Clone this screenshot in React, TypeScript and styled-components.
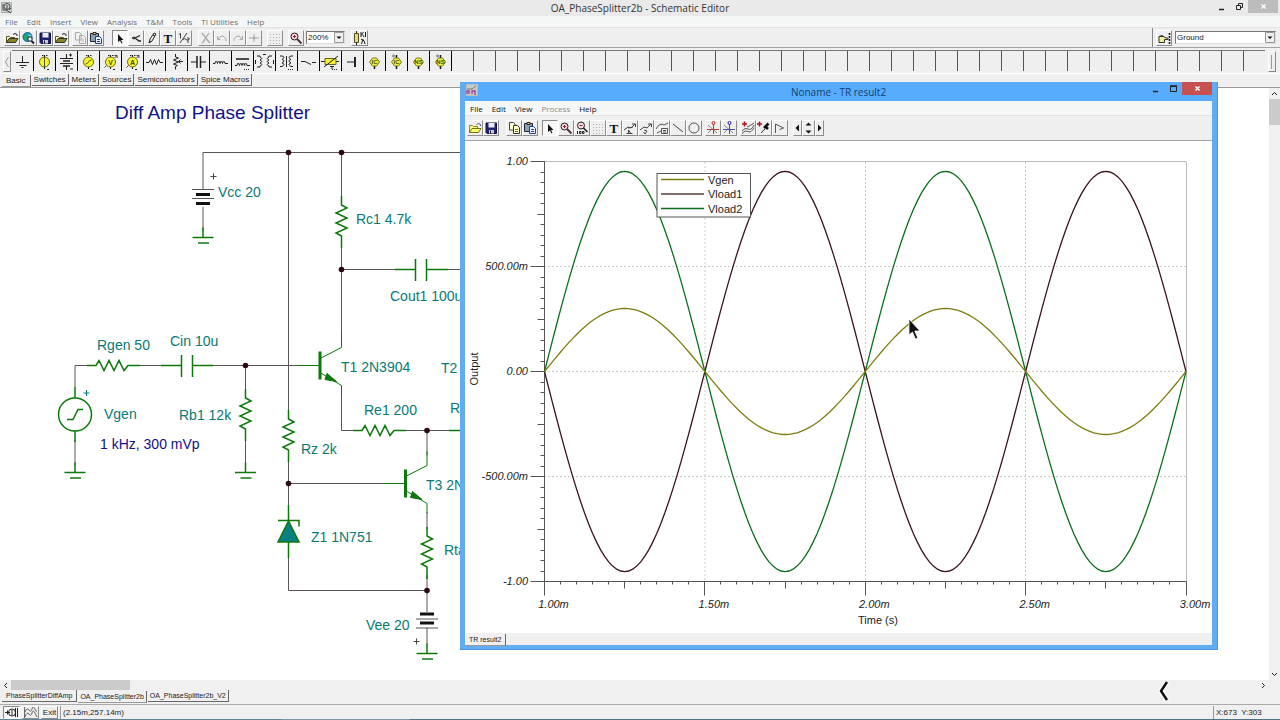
import React from "react";
import styled, { createGlobalStyle, css } from "styled-components";

const Global = createGlobalStyle`
  *, *::before, *::after { box-sizing: border-box; }
  body { margin: 0; background: #f0f0f0; }
  button, select { font: inherit; color: inherit; margin: 0; padding: 0; border-radius: 0; }
`;

const ui = `"Open Sans", "Noto Sans", sans-serif`;
const bitmap = `"Liberation Sans", Arial, sans-serif`;

const Desktop = styled.div`
  position: relative;
  display: flex;
  flex-direction: column;
  min-height: 100vh;
  overflow: hidden;
  background: #f0f0f0;
  color: #222;
  font: 8px/10px ${bitmap};
`;

/* ---------- title bars and menus ---------- */
const TitleBar = styled.header<{ $inner?: boolean }>`
  display: grid;
  grid-template-columns: 96px 1fr 96px;
  align-items: start;
  height: ${(p) => (p.$inner ? 19 : 16)}px;
  background: ${(p) => (p.$inner ? "#58acfd" : "#eaeaea")};
`;
const TitleIcon = styled.svg`
  width: 12px;
  height: 12px;
  margin: 2px 1px 0;
`;
const Title = styled.h1<{ $inner?: boolean }>`
  margin: 0;
  padding-top: ${(p) => (p.$inner ? 3 : 1)}px;
  text-align: center;
  white-space: nowrap;
  font: 400 10px/14px ${ui};
  color: ${(p) => (p.$inner ? "#12406e" : "#333")};
`;
const WinButtons = styled.div<{ $inner?: boolean }>`
  display: flex;
  justify-content: flex-end;
  margin-right: ${(p) => (p.$inner ? 0 : 2)}px;
`;
const WinButton = styled.button<{ $close?: string }>`
  display: grid;
  place-items: center;
  width: ${(p) => (p.$close ? 30 : 18)}px;
  height: 13px;
  border: 0;
  background: ${(p) => p.$close || "transparent"};
  color: ${(p) => (p.$close ? "#fff" : "#222")};
  svg { width: 9px; height: 9px; }
`;
const MenuBar = styled.nav<{ $inner?: boolean }>`
  display: flex;
  gap: 9px;
  height: ${(p) => (p.$inner ? 15 : 12)}px;
  padding: ${(p) => (p.$inner ? "2px 5px" : "0 5px")};
  border-bottom: 1px solid #e2e4e4;
  background: #f5f7f7;
  color: ${(p) => (p.$inner ? "#111" : "#6c6c6c")};
`;
const MenuItem = styled.button<{ $off?: boolean }>`
  border: 0;
  background: none;
  white-space: nowrap;
  font: 8px/11px ${ui};
  ${(p) => p.$off && "color: #8a8a8a;"}
`;

/* ---------- toolbars ---------- */
const ToolRow = styled.div<{ $inner?: boolean }>`
  display: flex;
  align-items: center;
  height: ${(p) => (p.$inner ? 25 : 20)}px;
  padding: 0 4px 0 ${(p) => (p.$inner ? 2 : 4)}px;
  border-bottom: 1px solid #a4a4a4;
  background: #efefef;
`;
const Group = styled.div<{ $gap: number }>`
  display: flex;
  margin-right: ${(p) => p.$gap}px;
`;
const Tool = styled.button<{ $on?: boolean; $w?: number }>`
  display: grid;
  place-items: center;
  width: ${(p) => p.$w || 16}px;
  height: 16px;
  border: 1px solid;
  border-color: ${(p) => (p.$on ? "#888 #fff #fff #888" : "#fff #8c8c8c #8c8c8c #fff")};
  background: ${(p) => (p.$on ? "#f8f8f8" : "#efefef")};
  svg { display: block; width: ${(p) => (p.$w || 16) - 2}px; height: 14px; }
`;
const RightGroup = styled.div`
  display: flex;
  align-items: center;
  gap: 3px;
  height: 19px;
  margin-left: auto;
  padding-left: 3px;
  border-left: 1px solid #888;
`;
const Combo = styled.label<{ $w: number; $gap?: number }>`
  display: grid;
  width: ${(p) => p.$w}px;
  height: 13px;
  margin-right: ${(p) => p.$gap || 0}px;
  border: 1px solid;
  border-color: #777 #ddd #ddd #777;
  background: #fff;
  select, svg { grid-area: 1 / 1; }
  select { appearance: none; width: 100%; border: 0; padding-left: 1px; background: none; font-size: 8px; line-height: 10px; }
  svg { justify-self: end; width: 10px; height: 11px; pointer-events: none; }
`;

/* ---------- component palette ---------- */
const Palette = styled.div`
  display: flex;
  height: 24px;
  margin-top: 2px;
  padding: 0 4px 0 3px;
  border-bottom: 1px solid #fff;
`;
const PaletteArrow = styled.button`
  flex: none;
  width: 8px;
  height: 21px;
  margin-top: 1px;
  border: 1px solid;
  border-color: #fff #888 #888 #fff;
  background: #efefef;
  svg { display: block; width: 6px; height: 18px; }
`;
const Strip = styled.div`
  display: flex;
  flex: 1;
  height: 21px;
  margin: 0 3px 0 1px;
  overflow: hidden;
  border-top: 1px solid #777;
  background: repeating-linear-gradient(to right, #efefef 0 21px, #555 21px 22px);
`;
const Part = styled.button`
  flex: none;
  width: 22px;
  height: 20px;
  border: 0;
  border-right: 1px solid #000;
  background: #efefef;
  svg { display: block; width: 21px; height: 20px; }
`;
const Tabs = styled.div<{ $place?: "sheets" | "inner" }>`
  display: flex;
  gap: 1px;
  height: ${(p) => (p.$place === "inner" ? 12 : 14)}px;
  padding-left: ${(p) => (p.$place === "inner" ? 0 : 2)}px;
  background: #f0f0f0;
  font-size: ${(p) => (p.$place ? 7 : 8)}px;
  ${(p) => !p.$place && css`border-bottom: 1px solid #999;`}
`;
const Tab = styled.button<{ $on?: boolean }>`
  height: 12px;
  margin-top: ${(p) => (p.$on ? 1 : 0)}px;
  padding: 0 2px;
  border: 0;
  border-right: 1px solid #666;
  border-bottom: 1px solid ${(p) => (p.$on ? "#999" : "#666")};
  background: #f0f0f0;
  white-space: nowrap;
  line-height: 11px;
  &:first-child { padding: 0 4px; }
`;

/* ---------- drawing sheet ---------- */
const Workspace = styled.main`
  display: grid;
  grid-template-columns: 1fr 11px;
  flex: 1;
  min-height: 592px;
  background: #fff;
`;
const Sheet = styled.svg`
  display: block;
  width: 100%;
  height: 100%;
  font-family: "Liberation Sans", Arial, sans-serif;
  font-size: 14px;
  fill: #087a74;
`;
const VScroll = styled.div`
  display: flex;
  flex-direction: column;
  background: #f0f0f0;
`;
const HScroll = styled.div`
  display: flex;
  height: 10px;
  padding-right: 11px;
  background: #f0f0f0;
`;
const ScrollArrow = styled.button`
  display: grid;
  place-items: center;
  width: 11px;
  height: 11px;
  border: 0;
  background: none;
  svg { width: 7px; height: 7px; }
`;
const Thumb = styled.div<{ $v?: boolean }>`
  background: #cbcbcb;
  ${(p) => (p.$v ? "height: 26px; margin-bottom: auto;" : "width: 119px; margin-right: auto;")}
`;
const StatusBar = styled.footer`
  display: flex;
  align-items: center;
  gap: 2px;
  height: 15px;
  padding-left: 3px;
  border-top: 1px solid #aaa;
  button { width: 17px; height: 13px; line-height: 11px; }
  button svg { width: 15px; height: 11px; }
`;
const StatusText = styled.span<{ $end?: boolean }>`
  ${(p) => (p.$end ? "width: 67px;" : "flex: 1;")}
  height: 13px;
  padding-left: 2px;
  border-left: 1px solid #999;
  line-height: 13px;
`;
const TaskEdge = styled.div`
  height: 1px;
  background: linear-gradient(to right, #5f8295 0 22%, #7f96a4 22% 32%, #4f7286 32%);
`;

/* ---------- result window ---------- */
const ResultWindow = styled.section`
  position: absolute;
  top: 82px;
  left: 460px;
  right: 62px;
  display: flex;
  flex-direction: column;
  padding: 0 5px 4px;
  border: 1px solid #4a98e4;
  border-width: 0 1px 1px 0;
  background: #60adf2;
`;
const Plot = styled.svg`
  display: block;
  width: 100%;
  background: #fff;
  font-family: "Liberation Sans", Arial, sans-serif;
  font-size: 11px;
  fill: #222;
`;
const Pointer = styled.svg`
  position: absolute;
  top: 318px;
  left: 908px;
  width: 13px;
  height: 22px;
`;
const Chevron = styled.svg`
  position: absolute;
  right: 109px;
  bottom: 17px;
  width: 14px;
  height: 24px;
`;

/* ---------- icons ---------- */
const I = ({ children, v = "0 0 14 14" }: { children: React.ReactNode; v?: string }) => (
  <svg viewBox={v} fill="none" stroke="#222" aria-hidden="true">{children}</svg>
);

const icons: Record<string, React.ReactNode> = {
  open: <I><path d="M1.500 11.500V5.500h3l1 1h4v1" stroke="#555522" fill="#ffffb0" /><path d="M1.500 11.500l2.500-4h9l-2.500 4z" fill="#8a8420" stroke="#333" /><path d="M8 3.500q2-2 4 0v1.500" /></I>,
  openY: <I><path d="M1.500 11.500V4.500h3l1 1h4v2" stroke="#8a8420" fill="#ffff90" /><path d="M1.500 11.500l2.500-4h9l-2.500 4z" fill="#ffff70" stroke="#77701a" /><path d="M8.500 3.500q2-2 4 0v1.500" stroke="#555" /></I>,
  globe: <I><circle cx="6" cy="6" r="4.500" fill="#18a0b0" stroke="#145f88" /><path d="M3 3.500l3 1-1 3-2 1z" fill="#2aa545" stroke="none" /><path d="M7 4l3 1" stroke="#b8f0f0" /><circle cx="8.500" cy="8" r="2.200" fill="#d8f4ff" /><path d="M10 10l2.500 2.500" strokeWidth="2" /></I>,
  save: <I><path d="M2 2h10.500v10.500H3L2 11.500z" fill="#22226e" stroke="#111144" /><path d="M4.500 2h6v4.500h-6z" fill="#e8ecf4" stroke="none" /><path d="M5 9h5v3.500H5z" fill="#ccc" stroke="none" /><path d="M6.500 9.500v3" stroke="#111144" /></I>,
  copyOff: <I><path d="M2.500 1.500h4l1.500 1.500v6H2.500zM6.500 4.500h4l2 2v6h-6z" fill="#f3f3f3" stroke="#aaa" /><path d="M8 8h3M8 10h3" stroke="#bbb" /></I>,
  copy: <I><path d="M2.500 1.500h4l1.500 1.500v6H2.500z" fill="#ffffd8" stroke="#444" /><path d="M6.500 4.500h4l2 2v6h-6z" fill="#ffffc8" stroke="#333" /><path d="M8 8.500h3M8 10.500h3" stroke="#77731c" /></I>,
  paste: <I><path d="M1.500 2.500h8v8h-8z" fill="#88a0b8" stroke="#223" /><path d="M4 1.500h3v2H4z" fill="#ffe970" stroke="#222" /><path d="M6.500 5.500h4l2 2v5h-6z" fill="#eef4ff" stroke="#224080" /><path d="M8 8.500h3M8 10.500h3" stroke="#224080" /></I>,
  cursor: <I><path d="M5 3v8l2-1.500 1.500 3 1-.5L8 9h2.500z" fill="#111" stroke="none" /></I>,
  wire: <I><path d="M3 7h3M6 7l5-2.500M6 7l4 3h2" strokeWidth="1.300" /><path d="M5 5.500v3" /></I>,
  pencil: <I><path d="M4 12l1-4 4-6 2 1-4 7z" fill="#f6f6e8" /><path d="M4 12l2-2M8 4l2 1" /></I>,
  text: <I><text x="2.500" y="11.500" fontFamily="Liberation Serif" fontWeight="700" fontSize="13" fill="#111" stroke="none">T</text></I>,
  frac: <I><path d="M2 3.500l1.500-1v5M3 12l7-10M6 8.500q2-2 3 0t4-1M11 6v6" stroke="#444" /></I>,
  cut: <I><path d="M3 2l7 9M10 2L4 11M3 12l3-3M8 9l3 3" stroke="#aaa" strokeWidth="1.300" /></I>,
  undo: <I><path d="M3 8q4-6 8 0v2M2.500 5v3.500h3" stroke="#aaa" /></I>,
  redo: <I><path d="M11 8q-4-6-8 0v2M11.500 5v3.500h-3" stroke="#aaa" /></I>,
  plusOff: <I><path d="M7 3v8M2 7h10" stroke="#aaa" /><circle cx="7" cy="7" r="1.500" fill="#aaa" stroke="none" /></I>,
  grid: <I><path d="M2 3.500h11M2 6.500h11M2 9.500h11M2 12.500h11" stroke="#b0b0b0" strokeDasharray="1 2" /></I>,
  zoomIn: <I><circle cx="5.500" cy="5.500" r="3.500" fill="#f3dada" /><path d="M4 5.500h3M5.500 4v3" stroke="#a01c38" /><path d="M8 8l4.500 4.500" strokeWidth="2" stroke="#54323a" /></I>,
  zoom100: <I><circle cx="6" cy="4.500" r="3.500" fill="#f0dede" /><path d="M4.500 4.500h3" stroke="#a01c38" /><path d="M8.500 7l4 4" strokeWidth="1.600" /><path d="M2.500 10v3M4.500 10.500h1.500v2H4.500zM7.500 10.500h1.500v2H7.500z" /></I>,
  chip: <I v="0 0 15 14"><path d="M4.500 0v2M4.500 12v2" /><path d="M2.500 2.500h4v9h-4z" fill="#e4d890" stroke="#55501a" /><path d="M9 1v5M9 4l2.500-3M10.500 3.500L12 6M13.500 1v5M9 8q4 1 4 5M11 8l-1.500 5" /></I>,
  hand: <I><path d="M2 5.500h5M2 11.500V5.500l3-1 4 2.500h2v1.500H7.500v3z" fill="#f2ee9a" stroke="#333" /><path d="M12.500 2v11" stroke="#111" strokeWidth="1.500" strokeDasharray="2 1" /></I>,
  probe1: <I><path d="M1 9l4-3 3 1 4-4M9 3h3.500v3M5 7l5-1M3.500 12.500h6M5.500 12V9l2 3" stroke="#444" /></I>,
  probe2: <I><path d="M1 9l4-3 3 1 4-4M9 3h3.500v3M5 9l3 1-2 3-1.500-2" stroke="#444" /></I>,
  label: <I><path d="M1 8q4-7 8-4l4-2M6.500 7.500h6v5h-6zM8 9.500h3M8 11h3M2 12l4-2" stroke="#555" /></I>,
  line: <I><path d="M2 3l10 8" stroke="#444" /></I>,
  ellipse: <I><circle cx="7" cy="7" r="5" stroke="#555" /></I>,
  crossR: <I><path d="M2 4l9 8M2 12l4-4" stroke="#888" /><path d="M1 8.500h12M7.500 3v10" stroke="#b23a3a" /><circle cx="7.500" cy="2" r="1.500" stroke="#b22" /></I>,
  crossB: <I><path d="M2 4l9 8M2 12l4-4" stroke="#888" /><path d="M1 8.500h12M7.500 3v10" stroke="#4a50a0" /><circle cx="7.500" cy="2" r="1.500" stroke="#22a" /></I>,
  addCurves: <I><path d="M1 3h5M3.500 .5v5" stroke="#b01020" strokeWidth="1.500" /><path d="M1 10q3-4 6-2t6-4M1 12.500q3-4 6-2t6-4M6 6q3-1 7-4" stroke="#555" /></I>,
  addProbe: <I><path d="M0 3h5M2.500 .5v5" stroke="#b01020" strokeWidth="1.500" /><path d="M4 12l4-4" stroke="#333" /><path d="M7 7l4.500-4.500M8 5l3 3" stroke="#111" strokeWidth="2.500" /></I>,
  flag: <I><path d="M2.500 12V3l8 4-4 1.500" stroke="#555" /></I>,
  run: <I v="0 0 15 11"><circle cx="8" cy="5.500" r="3.500" /><path d="M1 5.500h5M3.500 3.500v4M8 3v5M11.500 1v9M13.500 1v9" /></I>,
  waves: <I v="0 0 15 11"><path d="M1.500 0v11M2 10q2-6 4-3t3-1 3 0 2 4M2 5q2-5 4-2t3-1 3 0 2 3" stroke="#666" /></I>,
};

const src = (inner: React.ReactNode) => (
  <>
    <path d="M10.500 4v14" stroke="#111" />
    <circle cx="10.500" cy="11" r="5" fill="#f5f52c" stroke="#6b6b10" />
    {inner}
  </>
);
const letter = (t: string) => (
  <text x="10.500" y="13.500" fontSize="7" fontWeight="700" textAnchor="middle" fill="#4a4a08" stroke="none">{t}</text>
);
const marks = <path d="M8 4.500h1.500M12 4.500h1.500M13 18.500h2" stroke="#222" />;
const meter = <path d="M4.500 16.500l2-2M14.500 7L17 4.500M14.500 4.500H17V7" stroke="#444" />;
const more = <path d="M12 18.500h6" stroke="#333" strokeDasharray="1 1" />;

const chipMark = (t: string, dot: boolean) => (
  <>
    <path d="M10.500 14v4" stroke="#111" strokeWidth="1.500" />
    {dot && <><path d="M10.500 4v4" stroke="#111" strokeWidth="1.500" /><circle cx="7.500" cy="5" r="1.400" fill="#888" stroke="none" /></>}
    <path d="M5.500 11l3-4h4l3 4-3 4h-4z" fill="#f1f13e" stroke="#77771c" />
    <text x="10.500" y="13" fontSize="6" fontWeight="700" textAnchor="middle" fill="#4a4a08" stroke="none">{t}</text>
  </>
);

const parts: [string, React.ReactNode][] = [
  ["Ground", <path d="M10.500 5v6M4 11.500h13M7.500 14.500h7M9.500 16.500h2" />],
  ["Current source", src(<><path d="M10.500 6v10" stroke="#555510" />{marks}</>)],
  ["Battery", <><path d="M10.500 3v4M10.500 15v4M4 7.500h13M4 12.500h13" /><path d="M7 10h7M7 15h7" strokeWidth="1.600" /><path d="M13 4h3M14.500 2.500v3M14 18h3" /></>],
  ["Generator", src(<><path d="M7.500 13q2 0 3-2t3-2" stroke="#555510" />{marks}</>)],
  ["Voltmeter", src(<>{letter("V")}{meter}{marks}</>)],
  ["Ammeter", src(<>{letter("A")}{meter}{marks}</>)],
  ["Resistor", <path d="M2 11.500h3l1.500-3 2 5 2-5 2 5 2-5 1.500 3h3" />],
  ["Potentiometer", <path d="M9.500 3v3l3 1-5 2 5 2-5 2 4 1.500-2 1v3M17 10.500h-4M14.500 8.500l-2 2 2 2" />],
  ["Capacitor", <><path d="M3 11h6M12 11h6" /><path d="M9 5v12M12.500 5v12" strokeWidth="1.500" /></>],
  ["Inductor", <path d="M3 12.500h2q1-5 2.500 0 1.200-5 2.500 0 1.200-5 2.500 0 1.200-5 2.500 0h3" />],
  ["Coil with core", <><path d="M3 14.500h2q1-5 2.500 0 1.200-5 2.500 0 1.200-5 2.500 0 1.200-5 2.500 0h3" /><path d="M4 8h13" strokeWidth="1.600" />{more}</>],
  ["Coupled coils", <path d="M3 5h3v1q3.500 1.500 0 3 3.500 1.500 0 3 3.500 1.500 0 3v1H3M18 5h-3v1q-3.500 1.500 0 3-3.500 1.500 0 3-3.500 1.500 0 3v1h3M9 3.500h3M1.500 9v4M19.500 9v4" />],
  ["Transformer", <><path d="M4 5h2q4 1 0 3.500 4 1 0 3.500 4 1 0 3.500H4M17 5h-2q-4 1 0 3.500-4 1 0 3.500-4 1 0 3.500h2M10.500 5v11" />{more}</>],
  ["Switch", <path d="M3 10.500h4l6 3M14 11.500h4" />],
  ["Controlled resistor", <><path d="M1 10.500h18" /><path d="M5 7.500h11v6H5z" fill="#f1f13e" stroke="#66661a" /><path d="M4 16L18 5M12 15v3M10 15.500h4" />{more}</>],
  ["Terminal", <><path d="M5 11h7" /><path d="M13 6v10" strokeWidth="2" /></>],
  ["Input", chipMark("IC", false)],
  ["Input marked", chipMark("IC", true)],
  ["Node", chipMark("NS", false)],
  ["Node marked", chipMark("NS", true)],
];

const T = ({ n, label, on, w }: { n: string; label?: string; on?: boolean; w?: number }) => (
  <Tool type="button" aria-label={label || n} $on={on} $w={w}>{icons[n]}</Tool>
);
const ToolSet = ({ names, gap, on }: { names: string[]; gap: number; on?: string }) => (
  <Group $gap={gap}>{names.map((n) => <T key={n} n={n} on={n === on} />)}</Group>
);
const DropArrow = () => (
  <svg viewBox="0 0 10 11" aria-hidden="true"><path d="M.5.500h9v10h-9z" fill="#efefef" stroke="#999" /><path d="M2.500 4.500h5L5 7z" fill="#111" /></svg>
);
const WinControls = ({ inner }: { inner?: boolean }) => (
  <WinButtons $inner={inner}>
    <WinButton type="button" aria-label="Minimize"><I v="0 0 9 9"><path d="M2 7.500h5" strokeWidth="1.500" /></I></WinButton>
    <WinButton type="button" aria-label="Restore">
      <I v="0 0 9 9">{inner ? <><path d="M1.500 2.500h6v5h-6z" /><path d="M1 2h7" strokeWidth="1.500" /></> : <><path d="M1.500 3.500h4v4h-4zM3.500 3V1.500h4v4H6" /></>}</I>
    </WinButton>
    <WinButton type="button" aria-label="Close" $close={inner ? "#c75050" : "#bcbcbc"}><I v="0 0 9 9"><path d="M2.500 2.500l4 4M6.500 2.500l-4 4" stroke="#fff" strokeWidth="1.400" /></I></WinButton>
  </WinButtons>
);

/* ---------- schematic ---------- */
const GREEN = "#0c780c";
const WIRE = "#5a5454";

const ResV = ({ x, y }: { x: number; y: number }) => (
  <path transform={`translate(${x} ${y})`} d="M0 0v9l5.500 3-11 5 11 5-11 5 11 5-11 5 5.500 3v12" />
);
const ResH = ({ x, y }: { x: number; y: number }) => (
  <path transform={`translate(${x} ${y})`} d="M0 0h9l3-5 5 10 5-10 5 10 5-10 5 10 4-5h12" />
);
const Gnd = ({ x, y }: { x: number; y: number }) => (
  <path transform={`translate(${x} ${y})`} d="M0-10V0M-10.500 0h21M-5 5.500h11" />
);
const Npn = ({ x, y }: { x: number; y: number }) => (
  <g transform={`translate(${x} ${y})`}>
    <path d="M-22 0H0M0-7l21.500-11v-14M0 7l21.500 13v10" strokeWidth="1" />
    <path d="M0-14v28" strokeWidth="3" />
    <path d="M7 8L16.500 16 5 14z" fill={GREEN} strokeWidth="1" />
  </g>
);
const Battery = ({ x, y, flip }: { x: number; y: number; flip?: boolean }) => (
  <g transform={`translate(${x} ${y}) scale(1 ${flip ? -1 : 1})`} stroke="#111">
    <path d="M-11 0h22M-11 9h22" stroke="#555" strokeWidth="1" />
    <path d="M-7 5h14M-7 14h14" strokeWidth="3" />
  </g>
);

const dots = [[288.5, 152.5], [341.5, 152.5], [341.5, 269.5], [245.5, 365.5], [427, 430.5], [288.5, 483.5], [427, 590.5]];
const labels: [number, number, string][] = [
  [218, 197, "Vcc 20"], [356, 224, "Rc1 4.7k"], [390, 301, "Cout1 100u"], [97, 350, "Rgen 50"],
  [170, 346, "Cin 10u"], [341, 372, "T1 2N3904"], [441, 373, "T2"], [104, 419, "Vgen"],
  [179, 420, "Rb1 12k"], [364, 415, "Re1 200"], [450, 413, "R"], [301, 454, "Rz 2k"],
  [426, 490, "T3 2N"], [311, 542, "Z1 1N751"], [444, 555, "Rta"], [366, 630, "Vee 20"],
];

const Schematic = () => (
  <Sheet viewBox="0 88 1269 592" preserveAspectRatio="xMinYMin meet" role="img" aria-label="Diff Amp Phase Splitter schematic">
    <g stroke={WIRE} fill="none">
      <path d="M203 190V152.500H470M288.500 152.500V410M341.500 152.500V197M341.500 247V334M341.500 269.500H396M447 269.500H470" />
      <path d="M203 207V230M75 387V365.500H88M139 365.500H162M212 365.500H298M245.500 365.500V390M245.500 440V465M75 440V465" />
      <path d="M341.500 395V430.500H354M405 430.500H450M427 430.500V455M288.500 460V505M288.500 483.500H384M288.500 555V590.500H427" />
      <path d="M427 512V529M427 575V612M427 628V645" />
    </g>
    <g stroke={GREEN} fill="none" strokeWidth="1.500">
      <ResV x={341.5} y={196} /><ResV x={245.5} y={389} /><ResV x={288.5} y={410} /><ResV x={427} y={527} />
      <ResH x={87} y={365.5} /><ResH x={353} y={430.5} />
      <path d="M161 365.500h20.500M192.500 365.500H213M181.500 355v22M192.500 355v22" />
      <path d="M395 269.500h20.500M426.500 269.500H448M415.500 259v22M426.500 259v22M449 430.500h20" />
      <Gnd x={203} y={237.5} /><Gnd x={75} y={472.5} /><Gnd x={245.5} y={472.5} /><Gnd x={427} y={653.5} />
      <Npn x={320} y={365.5} /><Npn x={405.5} y={483.5} />
      <circle cx="75" cy="414.500" r="16.500" />
      <path d="M75 387v11M75 431v11M67 419.500h6l5-10h5" />
      <path d="M288.500 505v15M288.500 542v16M278 520.500h21v6" />
      <path d="M288.500 521l-10.500 21h21z" fill="#0a8080" />
    </g>
    <Battery x={203} y={189.5} /><Battery x={427} y={628} flip />
    <path d="M210.500 176.500h6M213.500 173.500v6M413.500 641.500h6M416.500 638.500v6" stroke="#444" />
    <path d="M83.500 393h6M86.500 390v6" stroke="#087a74" />
    <g fill="#2a0a10">{dots.map(([x, y]) => <circle key={`${x}-${y}`} cx={x} cy={y} r="2.800" />)}</g>
    {labels.map(([x, y, t]) => <text key={t} x={x} y={y}>{t}</text>)}
    <g fill="#10108c">
      <text x="115" y="119" fontSize="19">Diff Amp Phase Splitter</text>
      <text x="100" y="449">1 kHz, 300 mVp</text>
    </g>
  </Sheet>
);

/* ---------- transient plot ---------- */
const X0 = 544.5;
const Y0 = 371.5;
const W = 641.5;
const H = 210;
const wave = (amp: number) =>
  Array.from({ length: 161 }, (_, i) => {
    const t = i / 80;
    return `${i ? "L" : "M"}${(X0 + (W * t) / 2).toFixed(2)} ${(Y0 - H * amp * Math.sin(2 * Math.PI * t)).toFixed(2)}`;
  }).join("");
const yTicks = Array.from({ length: 41 }, (_, i) => {
  const y = Y0 - H + i * (H / 20);
  const len = i % 10 === 0 ? 14 : i % 5 === 0 ? 7 : 4;
  return `M${X0} ${Math.floor(y) + 0.5}h${-len}`;
}).join("");
const xTicks = Array.from({ length: 41 }, (_, i) => {
  const len = i % 10 === 0 ? 14 : i % 5 === 0 ? 7 : 3;
  return `M${Math.floor(X0 + (i * W) / 40) + 0.5} ${Y0 + H}v${len}`;
}).join("");
const traces: [string, string, number][] = [["Vload1", "#3a1418", -0.953], ["Vload2", "#0b6e1c", 0.953], ["Vgen", "#7c7c10", 0.3]];
const legend: [string, string][] = [["Vgen", "#7c7c10"], ["Vload1", "#5c3c3c"], ["Vload2", "#0b6e1c"]];

const Chart = () => (
  <Plot viewBox="465 141 747 492" role="img" aria-label="Output voltage against time">
    <g stroke="#ccc" strokeDasharray="2 2"><path d="M544 266.500h642M544 371.500h642M544 476.500h642M705 162v420M865.500 162v420M1025.500 162v420" /></g>
    <path d="M544 161.500h642.500v420" fill="none" stroke="#bbb" />
    <g stroke="#555" fill="none">
      <path d={`M${X0} 161v421M544 581.500h642.500`} />
      <path d={yTicks} /><path d={xTicks} />
    </g>
    {traces.map(([n, c, a]) => <path key={n} d={wave(a)} fill="none" stroke={c} strokeWidth="1.300" />)}
    <rect x="657" y="173.500" width="93.500" height="43.500" fill="#fff" stroke="#555" />
    {legend.map(([n, c], i) => (
      <g key={n}>
        <path d={`M661 ${179.5 + i * 14.5}h43`} stroke={c} strokeWidth="1.300" />
        <text x="708" y={183.5 + i * 14.5}>{n}</text>
      </g>
    ))}
    <g fontStyle="italic" textAnchor="end">
      {["1.00", "500.00m", "0.00", "-500.00m", "-1.00"].map((t, i) => <text key={t} x="528" y={165 + i * 105}>{t}</text>)}
    </g>
    <g fontStyle="italic" textAnchor="middle">
      {["1.00m", "1.50m", "2.00m", "2.50m", "3.00m"].map((t, i) => <text key={t} x={553.5 + i * 160.4} y="608">{t}</text>)}
    </g>
    <text x="878" y="624" textAnchor="middle">Time (s)</text>
    <text transform="translate(478 369) rotate(-90)" textAnchor="middle">Output</text>
  </Plot>
);

export default function App() {
  return (
    <Desktop>
      <Global />
      <TitleBar>
        <TitleIcon viewBox="0 0 12 12" fill="none" stroke="#444"><path d="M.5.500h10v10H.5z" fill="#ccd2d2" stroke="#aaa" /><circle cx="6" cy="4.500" r="3" /><path d="M2 2v6h3l5 3M6 3v4M8 8l2-2" /></TitleIcon>
        <Title>OA_PhaseSplitter2b - Schematic Editor</Title>
        <WinControls />
      </TitleBar>
      <MenuBar aria-label="Main menu">
        {["File", "Edit", "Insert", "View", "Analysis", "T&M", "Tools", "TI Utilities", "Help"].map((m) => <MenuItem key={m} type="button">{m}</MenuItem>)}
      </MenuBar>
      <ToolRow>
        <Group $gap={3}><T n="open" /><T n="globe" w={17} /><T n="save" /><T n="open" label="open example" /></Group>
        <ToolSet names={["copyOff", "paste"]} gap={8} />
        <ToolSet names={["cursor", "wire", "pencil", "text", "frac"]} gap={6} on="cursor" />
        <ToolSet names={["cut", "undo", "redo", "plusOff"]} gap={5} />
        <ToolSet names={["grid"]} gap={5} />
        <ToolSet names={["zoomIn"]} gap={2} />
        <Combo $w={39} $gap={6}><select aria-label="Zoom" defaultValue="200%"><option>200%</option><option>100%</option></select><DropArrow /></Combo>
        <T n="chip" w={17} />
        <RightGroup>
          <T n="hand" />
          <Combo $w={101}><select aria-label="Component" defaultValue="Ground"><option>Ground</option><option>Battery</option></select><DropArrow /></Combo>
        </RightGroup>
      </ToolRow>
      <Palette>
        <PaletteArrow type="button" aria-label="Scroll left"><I v="0 0 6 18"><path d="M4.500 4L1.500 9l3 5" stroke="#999" /></I></PaletteArrow>
        <Strip>{parts.map(([n, d]) => <Part key={n} type="button" aria-label={n}><I v="0 0 21 20">{d}</I></Part>)}</Strip>
        <PaletteArrow type="button" aria-label="Scroll right"><I v="0 0 6 18"><path d="M2.500 2v14" stroke="#999" /></I></PaletteArrow>
      </Palette>
      <Tabs role="tablist">
        {["Basic", "Switches", "Meters", "Sources", "Semiconductors", "Spice Macros"].map((t, i) => <Tab key={t} type="button" role="tab" aria-selected={i === 0} $on={i === 0}>{t}</Tab>)}
      </Tabs>
      <Workspace>
        <Schematic />
        <VScroll>
          <ScrollArrow type="button" aria-label="Scroll up"><I v="0 0 7 7"><path d="M1 5l2.500-2.500L6 5" /></I></ScrollArrow>
          <Thumb $v />
          <ScrollArrow type="button" aria-label="Scroll down"><I v="0 0 7 7"><path d="M1 2l2.500 2.500L6 2" /></I></ScrollArrow>
        </VScroll>
      </Workspace>
      <HScroll>
        <ScrollArrow type="button" aria-label="Scroll sheet left"><I v="0 0 7 7"><path d="M5 1L2.500 3.500 5 6" /></I></ScrollArrow>
        <Thumb />
        <ScrollArrow type="button" aria-label="Scroll sheet right"><I v="0 0 7 7"><path d="M2 1l2.500 2.500L2 6" /></I></ScrollArrow>
      </HScroll>
      <Tabs role="tablist" $place="sheets">
        {["PhaseSplitterDiffAmp", "OA_PhaseSplitter2b", "OA_PhaseSplitter2b_V2"].map((t, i) => <Tab key={t} type="button" role="tab" aria-selected={i === 1} $on={i === 1}>{t}</Tab>)}
      </Tabs>
      <StatusBar>
        <T n="run" on /><T n="waves" /><Tool type="button">Exit</Tool>
        <StatusText>(2.15m,257.14m)</StatusText>
        <StatusText $end>X:673&nbsp; Y:303</StatusText>
      </StatusBar>
      <TaskEdge />

      <ResultWindow aria-label="TR result2">
        <TitleBar $inner>
          <TitleIcon viewBox="0 0 12 12" fill="none" stroke="#777"><path d="M.5.500h11v11H.5z" fill="#c4ccc4" stroke="#bbb" /><path d="M1 5h5l4-3" /><path d="M1 10V7h2v3M6 10V7h3v4" stroke="#a0409a" strokeWidth="1.300" /></TitleIcon>
          <Title as="h2" $inner>Noname - TR result2</Title>
          <WinControls inner />
        </TitleBar>
        <MenuBar $inner aria-label="Result menu">
          {["File", "Edit", "View", "Process", "Help"].map((m) => <MenuItem key={m} type="button" $off={m === "Process"}>{m}</MenuItem>)}
        </MenuBar>
        <ToolRow $inner>
          <ToolSet names={["openY", "save"]} gap={7} />
          <ToolSet names={["copy", "paste"]} gap={4} />
          <ToolSet names={["cursor", "zoomIn", "zoom100", "grid", "text", "probe1", "probe2", "label", "line", "ellipse"]} gap={3} on="cursor" />
          <ToolSet names={["crossR", "crossB"]} gap={3} />
          <ToolSet names={["addCurves", "addProbe", "flag"]} gap={5} />
          <Tool type="button" aria-label="Previous" $w={9}><I v="0 0 7 14"><path d="M5 3.500v7L1.500 7z" fill="#111" stroke="none" /></I></Tool>
          <Tool type="button" aria-label="Up or down" $w={13}><I v="0 0 11 14"><path d="M2.500 4.500h6l-3-3zM2.500 9.500h6l-3 3z" fill="#111" stroke="none" /></I></Tool>
          <Tool type="button" aria-label="Next" $w={9}><I v="0 0 7 14"><path d="M2 3.500v7L5.500 7z" fill="#111" stroke="none" /></I></Tool>
        </ToolRow>
        <Chart />
        <Tabs role="tablist" $place="inner"><Tab type="button" role="tab" aria-selected $on>TR result2</Tab></Tabs>
      </ResultWindow>

      <Pointer viewBox="0 0 13 22"><path d="M1 1v16l3.500-3 2.800 7 2.500-1-3-7H12z" fill="#111" stroke="#fff" strokeWidth=".8" /></Pointer>
      <Chevron viewBox="0 0 14 24"><path d="M10 3L4 12l6 9" fill="none" stroke="#fff" strokeWidth="5" /><path d="M10 3L4 12l6 9" fill="none" stroke="#111" strokeWidth="2.500" /></Chevron>
    </Desktop>
  );
}
